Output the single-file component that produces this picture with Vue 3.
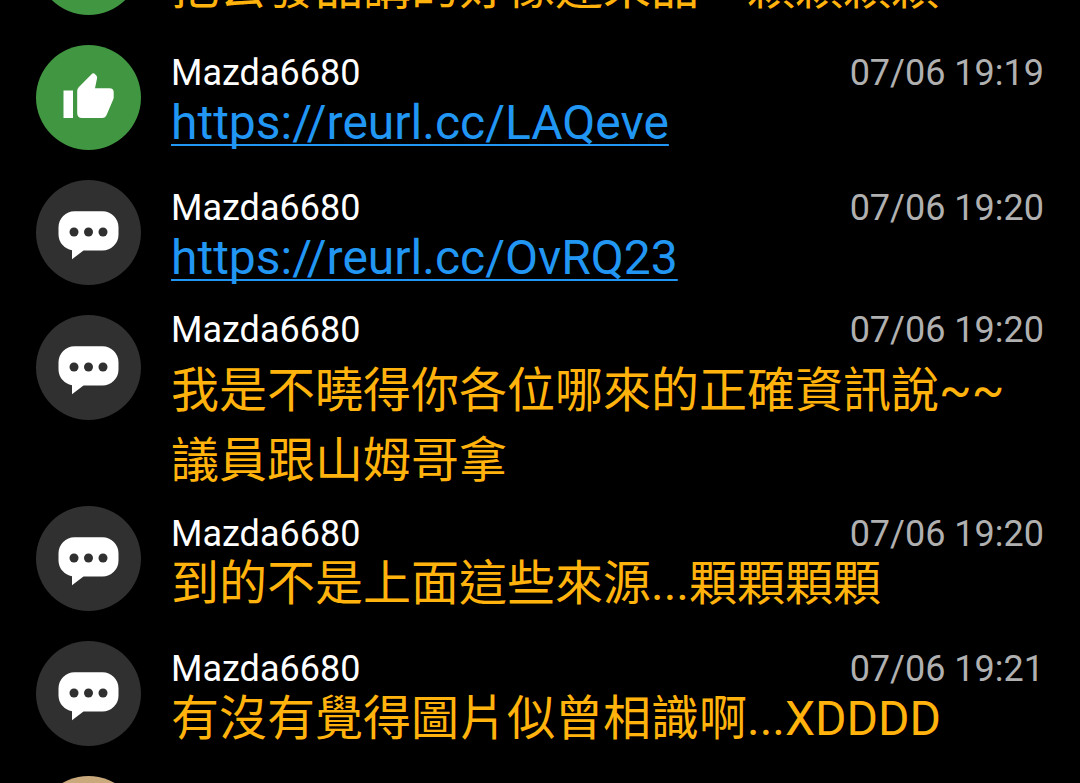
<script setup>
const comments = [
  { id: 1, kind: 'push', text: '把公發品講的好像連來品一顆顆顆顆' },
  { id: 2, kind: 'push', user: 'Mazda6680', time: '07/06 19:19', link: 'https://reurl.cc/LAQeve' },
  { id: 3, kind: 'reply', user: 'Mazda6680', time: '07/06 19:20', link: 'https://reurl.cc/OvRQ23' },
  { id: 4, kind: 'reply', user: 'Mazda6680', time: '07/06 19:20', text: '我是不曉得你各位哪來的正確資訊說~~議員跟山姆哥拿', tall: true },
  { id: 5, kind: 'reply', user: 'Mazda6680', time: '07/06 19:20', text: '到的不是上面這些來源...顆顆顆顆' },
  { id: 6, kind: 'reply', user: 'Mazda6680', time: '07/06 19:21', text: '有沒有覺得圖片似曾相識啊...XDDDD' },
  { id: 7, kind: 'photo' },
]
</script>

<template>
  <main class="screen">
    <ul class="list">
      <li v-for="c in comments" :key="c.id" class="row" :class="{ tall: c.tall }">
        <div class="avatar" :class="c.kind">
          <svg v-if="c.kind === 'push'" class="icon" viewBox="0 0 105 105" aria-hidden="true">
            <path d="M27.500 45.500H37V73h-9.500zM41.200 46q0-2.200 1.500-3.700L56.300 28.600q1-.8 2 0l1.800 1.600q1.200 1.200 1 2.800L59 43.300h14.500q4.200 0 4.200 4v5q0 1-.4 2L70.600 70q-1.300 3-4.400 3H46q-4.800 0-4.800-4.800z" />
          </svg>
          <svg v-else-if="c.kind === 'reply'" class="icon" viewBox="0 0 105 105" aria-hidden="true">
            <path d="M38.500 31.300H66.500A16 16 0 0 1 82.500 47.300V54.500A16 16 0 0 1 66.500 70.500H47.500L36 79.300V70.200A16 16 0 0 1 22.500 54.500V47.300A16 16 0 0 1 38.500 31.300z" />
            <g class="dots">
              <circle cx="38" cy="52" r="4.500" />
              <circle cx="52.500" cy="52" r="4.500" />
              <circle cx="67" cy="52" r="4.500" />
            </g>
          </svg>
        </div>
        <div class="body">
          <div class="head">
            <span class="user">{{ c.user }}</span>
            <time class="time">{{ c.time }}</time>
          </div>
          <p class="message">
            <a v-if="c.link" class="link" :href="c.link">{{ c.link }}</a>
            <template v-else>{{ c.text }}</template>
          </p>
        </div>
      </li>
    </ul>
  </main>
</template>

<style>
body {
  margin: 0;
  background: #000;
}
</style>

<style scoped>
.screen {
  height: 100vh;
  overflow: hidden;
  background: #000;
  font-family: Roboto, "Noto Sans CJK TC", sans-serif;
}
.list {
  list-style: none;
  margin: -90px 0 0;
  padding: 0 36px;
}
.row {
  display: flex;
  gap: 30px;
  min-height: 135px;
}
.avatar {
  flex: none;
  width: 105px;
  height: 105px;
  border-radius: 50%;
}
.push {
  background: #419642;
}
.reply {
  background: #303030;
}
.photo {
  background: #c9a97c;
}
.icon {
  display: block;
  width: 100%;
  height: 100%;
  fill: #fff;
}
.dots {
  fill: #303030;
}
.body {
  flex: 1;
  min-width: 0;
  padding-top: 13px;
}
.head {
  display: flex;
  justify-content: space-between;
  min-height: 30px;
  font-size: 36px;
  line-height: 30px;
}
.user {
  color: #fff;
}
.time {
  color: #b0b0b0;
}
.message {
  margin: 0;
  font-size: 48px;
  line-height: 70px;
  color: #ffb30c;
}
.link {
  color: #2196f3;
  text-decoration: underline;
  text-decoration-thickness: 2px;
  text-decoration-skip-ink: none;
  text-underline-offset: 5px;
}
.tall .body {
  padding: 0 0 10px;
}
.tall .message {
  margin-top: 11px;
}
</style>
